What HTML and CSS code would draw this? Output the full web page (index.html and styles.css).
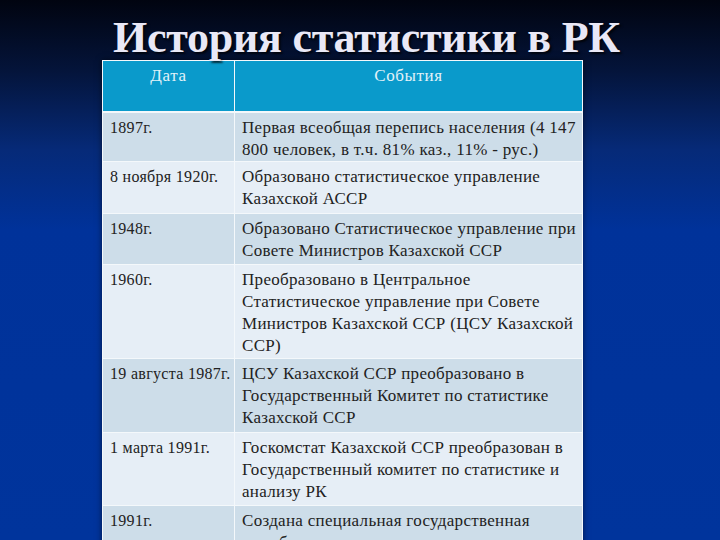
FILE: index.html
```html
<!DOCTYPE html>
<html lang="ru">
<head>
<meta charset="utf-8">
<title>История статистики в РК</title>
<link rel="stylesheet" href="styles.css">
</head>
<body>
<div class="slide">
  <h1 class="title">История статистики в РК</h1>
  <table class="history">
    <thead>
      <tr class="head"><th class="c-date">Дата</th><th class="c-event">События</th></tr>
    </thead>
    <tbody>
      <tr class="r1 dark"><td class="date">1897г.</td><td class="event">Первая всеобщая перепись населения (4 147<br>800 человек, в т.ч. 81% каз., 11% - рус.)</td></tr>
      <tr class="r2 light"><td class="date">8 ноября 1920г.</td><td class="event">Образовано статистическое управление<br>Казахской АССР</td></tr>
      <tr class="r3 dark"><td class="date">1948г.</td><td class="event">Образовано Статистическое управление при<br>Совете Министров Казахской ССР</td></tr>
      <tr class="r4 light"><td class="date">1960г.</td><td class="event">Преобразовано в Центральное<br>Статистическое управление при Совете<br>Министров Казахской ССР (ЦСУ Казахской<br>ССР)</td></tr>
      <tr class="r5 dark"><td class="date">19 августа 1987г.</td><td class="event">ЦСУ Казахской ССР преобразовано в<br>Государственный Комитет по статистике<br>Казахской ССР</td></tr>
      <tr class="r6 light"><td class="date">1 марта 1991г.</td><td class="event">Госкомстат Казахской ССР преобразован в<br>Государственный комитет по статистике и<br>анализу РК</td></tr>
      <tr class="r7 dark"><td class="date">1991г.</td><td class="event">Создана специальная государственная<br>служба статистики</td></tr>
    </tbody>
  </table>
</div>
</body>
</html>
```

FILE: styles.css
```css
html, body {
  margin: 0;
  padding: 0;
  width: 720px;
  height: 540px;
  overflow: hidden;
}
body {
  background: linear-gradient(180deg, #010410 0px, #04143a 70px, #062a78 150px, #00329a 230px, #00349c 540px);
  font-family: "Liberation Serif", "Times New Roman", "DejaVu Serif", serif;
}
.slide {
  position: relative;
  width: 720px;
  height: 540px;
  padding-top: 16px;
  box-sizing: border-box;
}
.title {
  position: relative;
  z-index: 2;
  margin: 0 0 0 113px;
  font-size: 44px;
  line-height: 44px;
  font-weight: bold;
  color: #e9e8f6;
  text-shadow: 2px 2px 2px rgba(0, 0, 0, 0.7);
  letter-spacing: -0.25px;
  white-space: nowrap;
}
.history {
  position: relative;
  z-index: 1;
  margin-left: 102px;
  width: 481px;
  border-collapse: collapse;
  table-layout: fixed;
  box-shadow: 0 0 6px rgba(0, 0, 0, 0.55);
  line-height: 22px;
  color: #222222;
}
.history th, .history td {
  border: 1px solid #f4f8fb;
  vertical-align: top;
  text-align: left;
  white-space: nowrap;
}
.c-date { width: 132px; }
.history th {
  background: #0a9acb;
  color: #e2f2f9;
  font-weight: normal;
  font-size: 17px;
  letter-spacing: 0.6px;
  text-align: center;
  height: 51px;
  padding: 4px 6px 0;
  box-sizing: border-box;
  border-bottom: 2px solid #f4f8fb;
}
.history td {
  padding: 4px 2px 0 7px;
  box-sizing: border-box;
}
.date {
  font-size: 16px;
  letter-spacing: 0.3px;
}
.event {
  font-size: 17px;
  letter-spacing: 0.3px;
}
.dark td { background: #cddde9; }
.light td { background: #e6eef6; }
.r1 td { height: 50px; }
.r2 td { height: 52px; }
.r3 td { height: 51px; }
.r4 td { height: 94px; }
.r5 td { height: 74px; }
.r6 td { height: 73px; }
.r7 td { height: 60px; }
```
